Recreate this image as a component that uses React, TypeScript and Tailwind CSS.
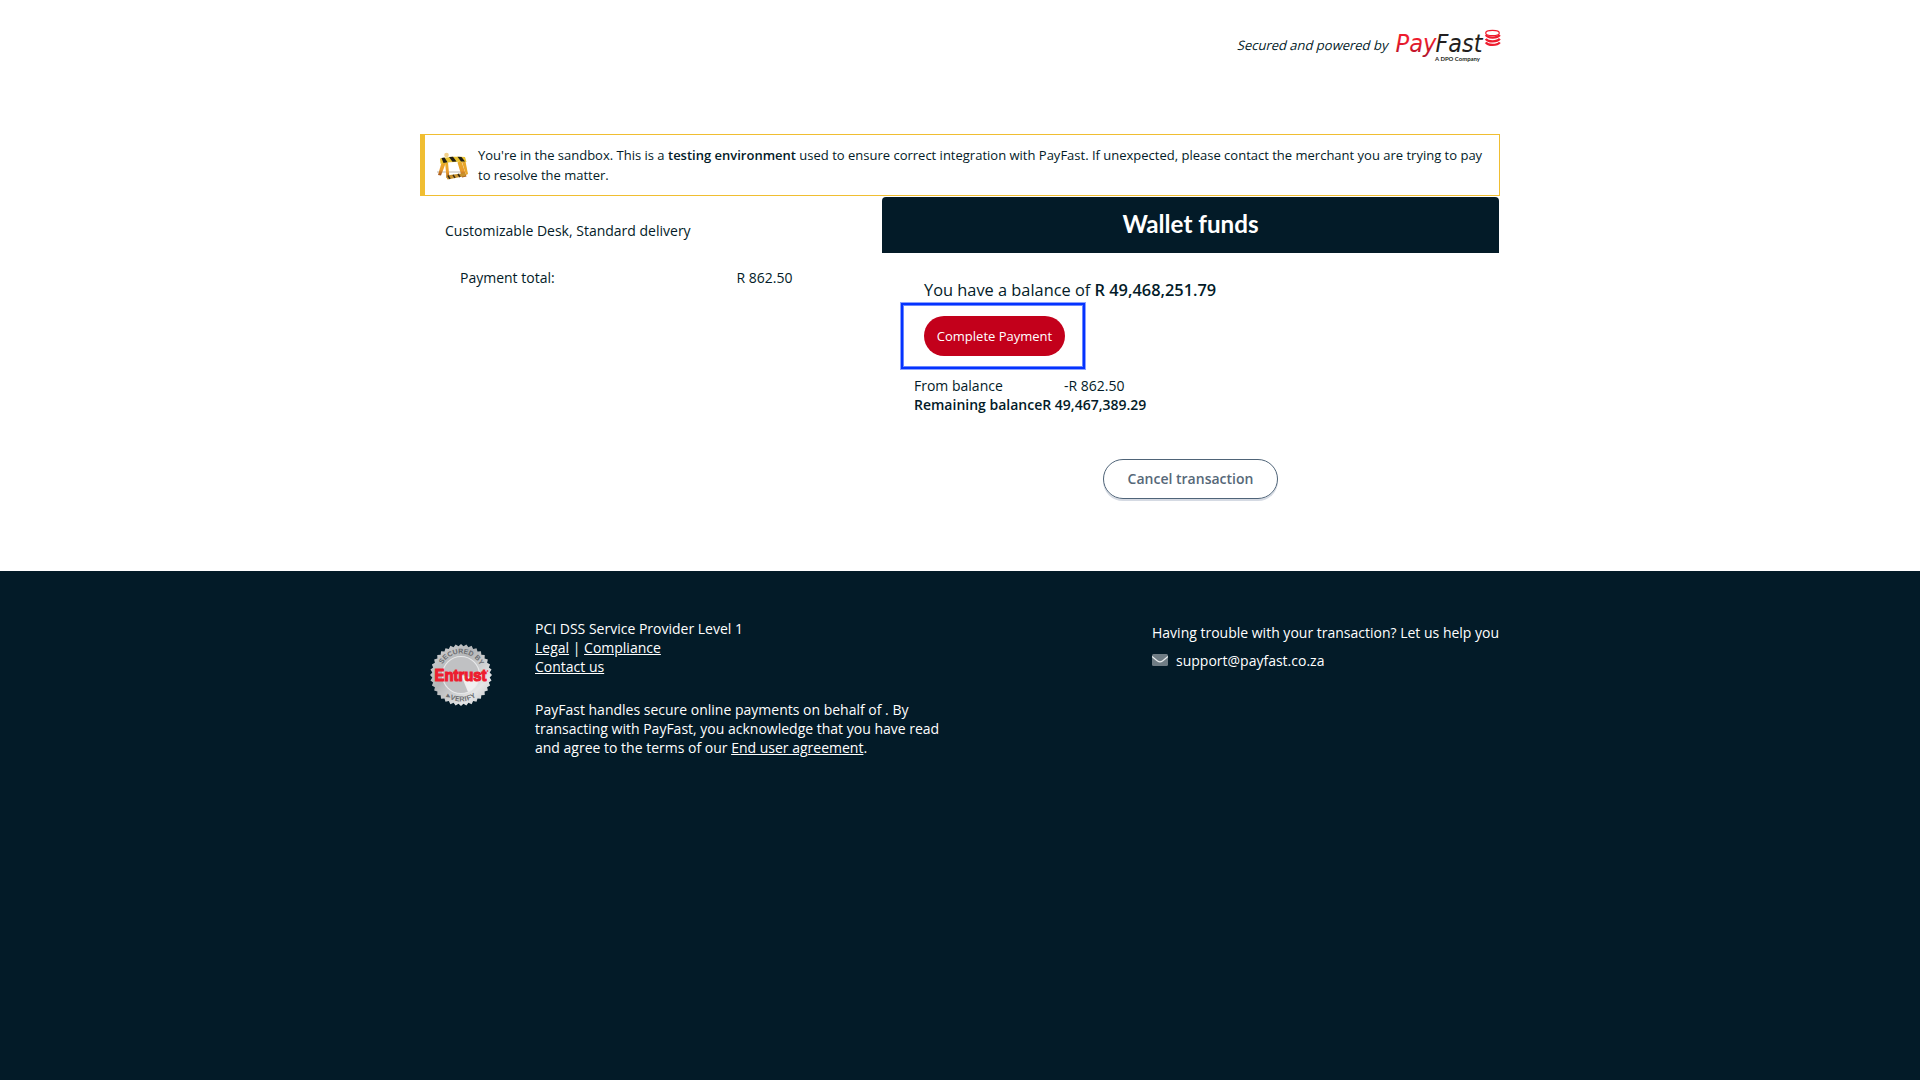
import React from "react";

function PayFastLogo() {
  return (
    <svg width="106" height="34" viewBox="1395 29 106 34" className="block" fontFamily="'DejaVu Sans', sans-serif">
      <defs>
        <linearGradient id="pay" x1="0" y1="0" x2="0" y2="1">
          <stop offset="0.4" stopColor="#ee1c2e" />
          <stop offset="1" stopColor="#a80f2a" />
        </linearGradient>
      </defs>
      <text x="1395.5" y="52" fontSize="24" fontStyle="italic" textLength="41" lengthAdjust="spacingAndGlyphs" fill="url(#pay)">Pay</text>
      <text x="1435.5" y="52" fontSize="24" fontStyle="italic" textLength="47" lengthAdjust="spacingAndGlyphs" fill="#231f20">Fast</text>
      <text x="1435" y="60.7" fontSize="6.200" fontFamily="Lato, sans-serif" fontWeight="700" textLength="45" lengthAdjust="spacingAndGlyphs" fill="#231f20">A DPO Company</text>
      <g fill="none" stroke="#ee1c2e">
        <ellipse cx="1492.500" cy="33" rx="6.800" ry="2.700" strokeWidth="1.200" />
        <g strokeWidth="2.300">
          <path d="M1485.800 35c2 3.400 11.500 3.400 14 0" />
          <path d="M1485.800 38.800c2 3.400 11.500 3.400 14 0" />
          <path d="M1485.800 42.400c2 3.400 11.500 3.400 14 0" />
        </g>
      </g>
    </svg>
  );
}

function Barrier() {
  return (
    <svg width="32" height="28" viewBox="437 152 32 28" className="block">
      <defs>
        <linearGradient id="leg" x1="0" y1="0" x2="0" y2="1">
          <stop offset="0" stopColor="#e8b02a" />
          <stop offset="0.600" stopColor="#e89a2c" />
          <stop offset="1" stopColor="#9c4f1c" />
        </linearGradient>
      </defs>
      <path d="M437 171h24v2h-24z" fill="#dedad4" />
      <path d="M442 161l-4 14 3 .5 5-13z" fill="url(#leg)" />
      <path d="M445 162l1.500 16 3 .5-1.500-16z" fill="url(#leg)" />
      <path d="M461 160l5.500 16.500-4.500 1-4.500-15z" fill="url(#leg)" />
      <path d="M465 159l3 15-2 1-4-13z" fill="#e8a62a" />
      <path d="M446 175.500l19-2.500.5 3-18 3.500z" fill="#c8922c" />
      <path d="M448 175.500l2 3.300M453 174.800l2 3M458 174l2 3" stroke="#3a2c18" strokeWidth="1.500" />
      <path d="M440 158.500c8-2 17-2 25-1.500l1.500 5c-8-.8-17-.3-26 1.800z" fill="#e9c22f" />
      <path d="M441.500 158l3-.5 3 4.700-4 .8zM449 157l4-.3 3.500 4.800-4 .2zM457.500 156.700l4 .2 3.500 4.700-4-.2z" fill="#1f1e17" />
      <circle cx="446.500" cy="155" r="2.300" fill="#f2d08a" />
    </svg>
  );
}

const sealPoints = Array.from({ length: 72 }, (_, i) => {
  const r = i % 2 ? 28.8 : 31;
  const a = (i * Math.PI) / 36;
  return `${(31 + r * Math.cos(a)).toFixed(2)},${(31 + r * Math.sin(a)).toFixed(2)}`;
}).join(" ");

function EntrustSeal() {
  return (
    <svg width="62" height="62" viewBox="0 0 62 62" className="block" fontFamily="'Liberation Sans', sans-serif">
      <defs>
        <linearGradient id="metal" x1="0" y1="0" x2="1" y2="1">
          <stop offset="0" stopColor="#d2d3d5" />
          <stop offset="0.400" stopColor="#b4b6b8" />
          <stop offset="0.750" stopColor="#e4e5e6" />
          <stop offset="1" stopColor="#bcbdbf" />
        </linearGradient>
        <path id="top-arc" d="M9.500 31a21.500 21.500 0 0 1 43 0" />
        <path id="bottom-arc" d="M4.500 31a26.500 26.500 0 0 0 53 0" />
      </defs>
      <polygon points={sealPoints} fill="url(#metal)" />
      <circle cx="31" cy="31" r="18.500" fill="#c0c1c3" stroke="#e8e9ea" strokeWidth="1.200" />
      <path d="M31 31L49 35A18.500 18.500 0 0 1 38 48z" fill="#f0f0f1" />
      <text fontSize="7" fontWeight="700" fill="#6b6d70">
        <textPath href="#top-arc" startOffset="51%" textAnchor="middle" textLength="46">SECURED BY</textPath>
      </text>
      <text fontSize="7.200" fontWeight="700" fill="#6b6d70">
        <textPath href="#bottom-arc" startOffset="50%" textAnchor="middle" textLength="32">▸VERIFY</textPath>
      </text>
      <text x="4.500" y="37" fontSize="16.500" fontWeight="700" textLength="52" lengthAdjust="spacingAndGlyphs" fill="#ee1c2e" stroke="#ee1c2e" strokeWidth="1.200">Entrust</text>
      <circle cx="57.500" cy="27" r="0.800" fill="#ee1c2e" />
    </svg>
  );
}

function Envelope() {
  return (
    <svg width="16" height="12" viewBox="0 0 16 12" className="block">
      <rect width="16" height="12" rx="1.500" fill="#6f7c84" />
      <path d="M0 2.500c2 1.800 4 3.300 5.500 4.400 1.700 1.300 3.300 1.300 5 0C12 5.800 14 4.300 16 2.500" fill="none" stroke="#e8ecee" strokeWidth="1.200" />
    </svg>
  );
}

export default function App() {
  return (
    <div className="flex h-[1080px] w-full flex-col overflow-hidden bg-white font-['Open_Sans',sans-serif] text-[14px] leading-[19px] text-[#031b28]">
      <div className="mx-auto flex h-[571px] w-[1080px] shrink-0 flex-col">
        <header className="flex h-[134px] shrink-0 items-start justify-end pt-[29px]">
          <span className="mt-[7px] mr-[6px] inline-block -skew-x-[14deg] text-[13px] leading-[18px]">Secured and powered by</span>
          <div className="-mr-px">
            <PayFastLogo />
          </div>
        </header>
        <div className="flex h-[62px] shrink-0 border border-l-[5px] border-[#f0be32] pt-[10px] pl-[12px]">
          <div className="mt-[7px] w-[32px]">
            <Barrier />
          </div>
          <p className="ml-[9px] w-[1008px] text-[13px] leading-[20px]">
            You're in the sandbox. This is a <b className="font-semibold">testing environment</b> used to ensure correct integration with PayFast. If unexpected, please contact the merchant you are trying to pay to resolve the matter.
          </p>
        </div>
        <main className="mt-px flex">
          <section className="w-[462px] pt-[24px] pl-[25px]">
            <p>Customizable Desk, Standard delivery</p>
            <div className="mt-[28px] flex pl-[15px]">
              <span className="w-[276.5px]">Payment total:</span>
              <span>R 862.50</span>
            </div>
          </section>
          <section className="flex w-[617px] flex-col">
            <h1 className="flex h-[56px] items-center justify-center rounded-t-[4px] bg-[#031b28] pb-[2px] font-['Lato',sans-serif] text-[24.2px] leading-[30px] font-bold text-white">
              Wallet funds
            </h1>
            <p className="mt-[26px] ml-[42px] text-[16.38px] leading-[22px]">
              You have a balance of <b className="font-semibold">R 49,468,251.79</b>
            </p>
            <div className="mt-[2px] ml-[19px] h-[66px] w-[184px] border-2 border-[#0433ff] pt-[11px] pl-[21px] shadow-[0_0_0_1px_#8ba1ff,inset_0_0_0_1px_#6a86ff]">
              <button className="block h-[40px] w-[141px] rounded-full bg-[#c3001b] text-[13px] text-white">Complete Payment</button>
            </div>
            <div className="mt-[7px] ml-[32px] grid grid-cols-[max-content_max-content]">
              <span>From balance</span>
              <span className="text-center">-R 862.50</span>
              <b className="font-semibold">Remaining balance</b>
              <b className="font-semibold">R 49,467,389.29</b>
            </div>
            <button className="mt-[45px] h-[40px] w-[175px] self-center rounded-full border border-[#4f6478] pb-[2px] font-semibold text-[#566878] shadow-[0_2px_0_#d5dae3]">
              Cancel transaction
            </button>
          </section>
        </main>
      </div>
      <footer className="flex-1 bg-[#031b28] text-white">
        <div className="mx-auto flex w-[1080px]">
          <div className="w-[115px] pt-[73px] pl-[10px]">
            <EntrustSeal />
          </div>
          <div className="w-[425px] pt-[48px]">
            <p>PCI DSS Service Provider Level 1</p>
            <p>
              <a className="underline">Legal</a> | <a className="underline">Compliance</a>
            </p>
            <p>
              <a className="underline">Contact us</a>
            </p>
            <p className="mt-[24px]">
              PayFast handles secure online payments on behalf of . By
              <br />
              transacting with PayFast, you acknowledge that you have read
              <br />
              and agree to the terms of our <a className="underline">End user agreement</a>.
            </p>
          </div>
          <div className="ml-auto w-[348px] pt-[52px] whitespace-nowrap">
            <p>Having trouble with your transaction? Let us help you</p>
            <div className="mt-[9px] flex">
              <div className="mt-[3px] mr-[8px]">
                <Envelope />
              </div>
              <span>support@payfast.co.za</span>
            </div>
          </div>
        </div>
      </footer>
    </div>
  );
}
